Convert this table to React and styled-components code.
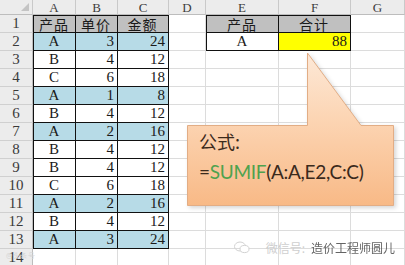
import styled, { createGlobalStyle } from 'styled-components';

const GlobalStyle = createGlobalStyle`
    html, body {
        margin: 0;
        padding: 0;
        background: #fff;
        overflow: hidden;
    }
`;

const Page = styled.div`
    position: relative;
    width: 405px;
    height: 265px;
    overflow: hidden;
    background: #fff;
`;

const Sheet = styled.div`
    display: grid;
    grid-template-columns: 33px 43px 42px 51px 37px 73px 72px 1fr;
    grid-template-rows: 15px repeat(14, 18px);
    font-family: "Liberation Serif", "DejaVu Serif", serif;
`;

const Cell = styled.div`
    box-sizing: border-box;
    display: flex;
    align-items: center;
    justify-content: ${p => p.$align === 'right' ? 'flex-end' : 'center'};
    padding: 0 3px 0 2px;
    background: ${p => p.$bg || '#fff'};
    border-right: 1px solid ${p => p.$line || '#dcdcdc'};
    border-bottom: 1px solid ${p => p.$line || '#dcdcdc'};
    border-left: ${p => p.$edgeL ? '1px solid #111' : 'none'};
    border-top: ${p => p.$edgeT ? '1px solid #111' : 'none'};
    font-size: 15px;
    color: #1a1a1a;
    white-space: nowrap;
`;

const ColHead = styled.div`
    box-sizing: border-box;
    display: flex;
    align-items: center;
    justify-content: center;
    background: #ececec;
    border-right: 1px solid #c9c9c9;
    border-bottom: 1px solid #bdbdbd;
    font-size: 13px;
    color: #3c3c3c;
    padding-top: 1px;
`;

const Corner = styled(ColHead)`
    justify-content: flex-end;
    align-items: flex-end;
    padding: 0 3px 3px 0;
`;

const RowHead = styled.div`
    box-sizing: border-box;
    display: flex;
    align-items: center;
    justify-content: center;
    background: #ececec;
    border-right: 1px solid #bdbdbd;
    border-bottom: 1px solid #d0d0d0;
    font-size: 15px;
    color: #3a3a3a;
`;

const Han = styled.span`
    font-family: "Noto Sans CJK SC", sans-serif;
    font-size: 14px;
    letter-spacing: 1px;
    color: #1a1a1a;
`;

const Callout = styled.svg`
    position: absolute;
    left: 0;
    top: 0;
    filter: drop-shadow(2px 2px 2px rgba(0, 0, 0, 0.16));
`;

const Note = styled.div`
    position: absolute;
    left: 199px;
    top: 129px;
    display: flex;
    flex-direction: column;
    gap: 7px;
    color: #3b2a1c;
`;

const NoteTitle = styled.div`
    font-family: "Noto Sans CJK SC", sans-serif;
    font-size: 18px;
    line-height: 24px;
`;

const Formula = styled.div`
    font-family: Lato, "Open Sans", sans-serif;
    font-size: 19px;
    line-height: 24px;
    letter-spacing: -0.3px;
`;

const Fn = styled.span`
    color: #4ea24e;
`;

const Mark = styled.div`
    position: absolute;
    right: 10px;
    bottom: 9px;
    display: flex;
    align-items: center;
    gap: 6px;
    font-family: "Noto Sans CJK SC", sans-serif;
    font-size: 12px;
    color: #cfcfcf;
`;

const MarkIcon = styled.span`
    display: flex;
    margin-right: 10px;
`;

const MarkName = styled.span`
    color: #4a4a4a;
    opacity: 0.85;
`;

const CornerMark = styled.div`
    position: absolute;
    left: 6px;
    bottom: 4px;
    font-family: "Noto Sans", sans-serif;
    font-size: 7px;
    color: #d6d6d6;
    letter-spacing: 0.5px;
`;

const data = [
    ['A', 3, 24], ['B', 4, 12], ['C', 6, 18], ['A', 1, 8],
    ['B', 4, 12], ['A', 2, 16], ['B', 4, 12], ['B', 4, 12],
    ['C', 6, 18], ['A', 2, 16], ['B', 4, 12], ['A', 3, 24],
];

const letters = ['A', 'B', 'C', 'D', 'E', 'F', 'G'];
const BLUE = '#b7dbe7';
const GRAY = '#c0c0c0';

const CornerTri = () => (
    <svg width="8" height="8" viewBox="0 0 8 8">
        <path d="M8 0 L8 8 L0 8 Z" fill="#c4c4c4" />
    </svg>
);

const WeChat = () => (
    <svg width="16" height="13" viewBox="0 0 16 13">
        <ellipse cx="6" cy="5.5" rx="5.5" ry="4.5" fill="none" stroke="#d2d2d2" strokeWidth="1" />
        <ellipse cx="10.5" cy="8" rx="4.5" ry="3.6" fill="#fff" stroke="#d2d2d2" strokeWidth="1" />
    </svg>
);

const Row = ({ n, item }) => {
    const [name, price, total] = item;
    const bg = name === 'A' ? BLUE : '#fff';
    return (
        <>
            <RowHead>{n}</RowHead>
            <Cell $bg={bg} $line="#111" $edgeL>{name}</Cell>
            <Cell $bg={bg} $line="#111" $align="right">{price}</Cell>
            <Cell $bg={bg} $line="#111" $align="right">{total}</Cell>
            <Cell />
            <Cell />
            <Cell />
            <Cell />
        </>
    );
};

export default function App() {
    return (
        <Page>
            <GlobalStyle />
            <Sheet>
                <Corner><CornerTri /></Corner>
                {letters.map(l => <ColHead key={l}>{l}</ColHead>)}

                <RowHead>1</RowHead>
                <Cell $bg={GRAY} $line="#111" $edgeL $edgeT><Han>产品</Han></Cell>
                <Cell $bg={GRAY} $line="#111" $edgeT><Han>单价</Han></Cell>
                <Cell $bg={GRAY} $line="#111" $edgeT><Han>金额</Han></Cell>
                <Cell />
                <Cell $bg={GRAY} $line="#111" $edgeL $edgeT><Han>产品</Han></Cell>
                <Cell $bg={GRAY} $line="#111" $edgeT><Han>合计</Han></Cell>
                <Cell />

                <RowHead>2</RowHead>
                <Cell $bg={BLUE} $line="#111" $edgeL>A</Cell>
                <Cell $bg={BLUE} $line="#111" $align="right">3</Cell>
                <Cell $bg={BLUE} $line="#111" $align="right">24</Cell>
                <Cell />
                <Cell $line="#111" $edgeL>A</Cell>
                <Cell $bg="#ffff00" $line="#111" $align="right">88</Cell>
                <Cell />

                {data.slice(1).map((item, i) => (
                    <Row key={i} n={i + 3} item={item} />
                ))}

                <RowHead>14</RowHead>
                <Cell /><Cell /><Cell /><Cell /><Cell /><Cell /><Cell />
            </Sheet>

            <Callout width="405" height="265" viewBox="0 0 405 265">
                <defs>
                    <linearGradient id="peach" x1="0" y1="52" x2="0" y2="206" gradientUnits="userSpaceOnUse">
                        <stop offset="0" stopColor="#fde9d8" />
                        <stop offset="0.45" stopColor="#fcd4b2" />
                        <stop offset="1" stopColor="#f8b986" />
                    </linearGradient>
                </defs>
                <path
                    d="M187.5 125.5 L307.5 125.5 L307.5 53 L361 125.5 L393.5 125.5 L393.5 205.5 L187.5 205.5 Z"
                    fill="url(#peach)"
                    stroke="#e2ad85"
                    strokeWidth="1"
                />
            </Callout>

            <Note>
                <NoteTitle>公式:</NoteTitle>
                <Formula>=<Fn>SUMIF</Fn>(A:A,E2,C:C)</Formula>
            </Note>

            <Mark>
                <MarkIcon><WeChat /></MarkIcon>
                <span>微信号:</span>
                <MarkName>造价工程师圆儿</MarkName>
            </Mark>
            <CornerMark>@头条号</CornerMark>
        </Page>
    );
}
